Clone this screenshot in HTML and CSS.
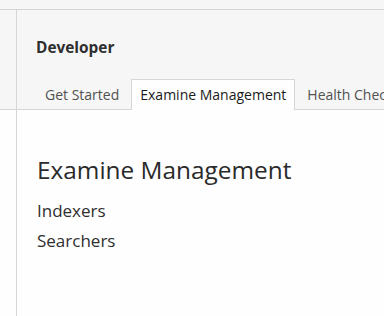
FILE: index.html
```html
<!DOCTYPE html>
<html>
<head>
<meta charset="utf-8">
<link rel="stylesheet" href="styles.css">
</head>
<body>
<div class="topbar"></div>
<div class="layout">
  <aside class="side">
    <div class="side-head"></div>
  </aside>
  <main class="main">
    <header class="head">
      <div class="title">Developer</div>
      <nav class="tabs">
        <div class="tab">Get Started</div>
        <div class="tab active">Examine Management</div>
        <div class="tab">Health Check</div>
      </nav>
    </header>
    <section class="content">
      <h1 class="h1">Examine Management</h1>
      <div class="item">Indexers</div>
      <div class="item">Searchers</div>
    </section>
  </main>
</div>
</body>
</html>
```
FILE: styles.css
```css
html, body {
  margin: 0;
  padding: 0;
  height: 100%;
  overflow: hidden;
}
body {
  background: #f6f6f6;
  font-family: "Open Sans", "Noto Sans", sans-serif;
  color: #303030;
}
.topbar {
  height: 9px;
  border-bottom: 1px solid #d6d6d6;
}
.layout {
  display: flex;
  height: calc(100% - 10px);
}
.side {
  width: 16px;
  flex: none;
  border-right: 1px solid #d6d6d6;
  background: #fefefe;
}
.side-head {
  height: 99px;
  background: #f6f6f6;
  border-bottom: 1px solid #d6d6d6;
}
.main {
  flex: 1;
  min-width: 0;
  display: flex;
  flex-direction: column;
  background: #fefefe;
  overflow: hidden;
}
.head {
  background: #f6f6f6;
  border-bottom: 1px solid #d6d6d6;
  padding: 0 0 0 19px;
  height: 100px;
  box-sizing: border-box;
  display: flex;
  flex-direction: column;
  justify-content: flex-end;
}
.title {
  font-weight: 700;
  font-size: 15.4px;
  line-height: 20px;
  color: #2e2e2e;
  margin-bottom: 21px;
}
.tabs {
  display: flex;
  white-space: nowrap;
  gap: 3px;
  margin-bottom: -1px;
}
.tab {
  font-size: 14px;
  line-height: 29px;
  height: 29px;
  padding: 0 8px;
  color: #515151;
  border: 1px solid transparent;
  border-bottom: 0;
  flex: none;
}
.tab.active {
  background: #fefefe;
  border-color: #d6d6d6;
  color: #1a1a1a;
  height: 30px;
}
.content {
  padding: 44px 20px 0 20px;
}
.h1 {
  font-weight: 400;
  font-size: 24.4px;
  line-height: 32px;
  margin: 0 0 10px 0;
  color: #2a2a2a;
}
.item {
  font-size: 17px;
  line-height: 30px;
  color: #2e2e2e;
}
```
